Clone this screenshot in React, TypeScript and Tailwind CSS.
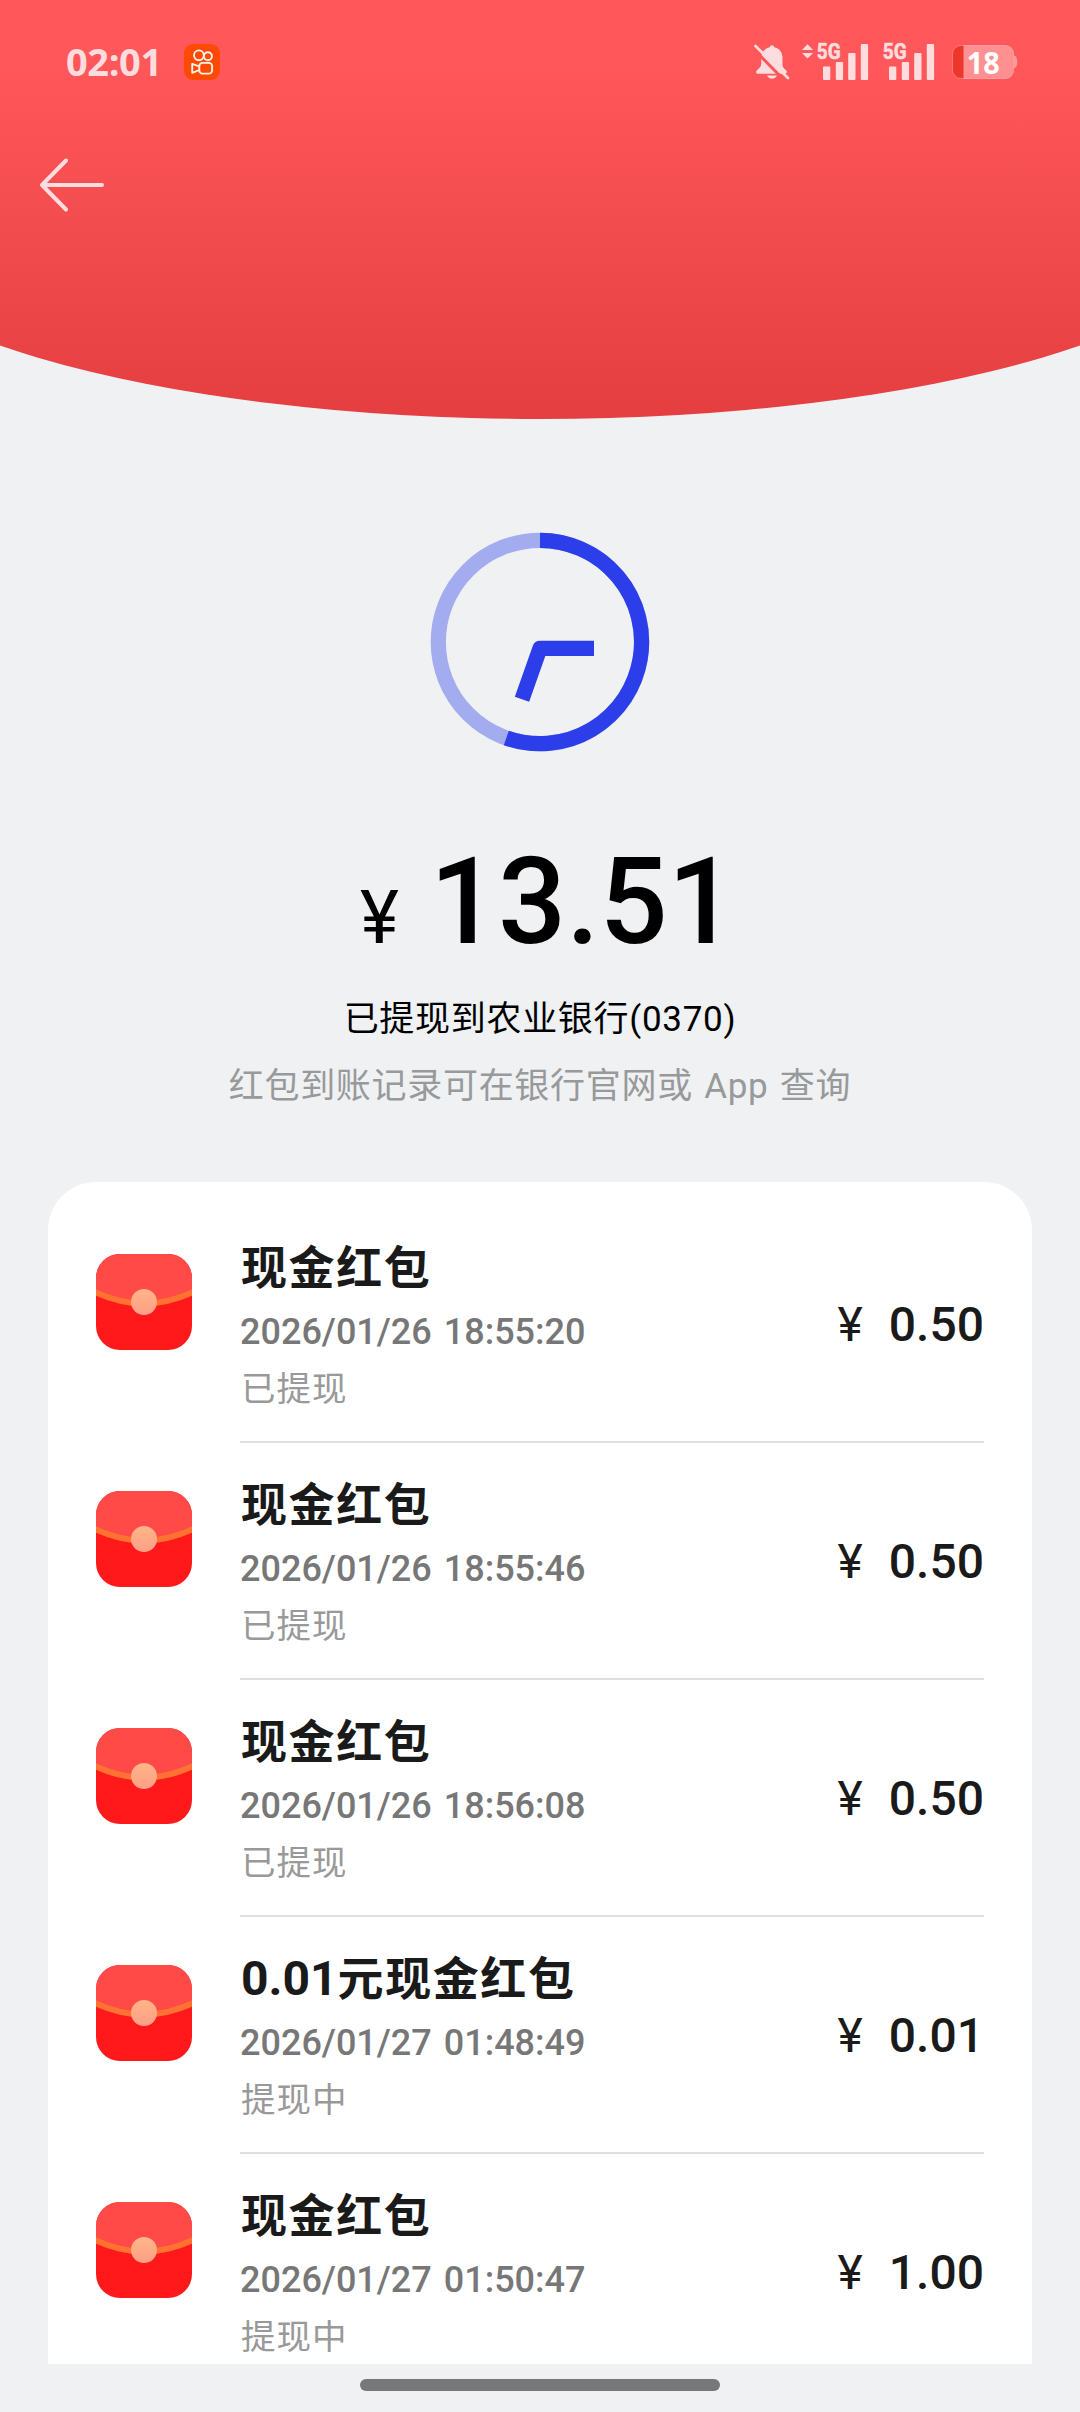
const records = [
  { prefix: '', title: '现金红包', time: '2026/01/26 18:55:20', status: '已提现', amount: '0.50' },
  { prefix: '', title: '现金红包', time: '2026/01/26 18:55:46', status: '已提现', amount: '0.50' },
  { prefix: '', title: '现金红包', time: '2026/01/26 18:56:08', status: '已提现', amount: '0.50' },
  { prefix: '0.01', title: '元现金红包', time: '2026/01/27 01:48:49', status: '提现中', amount: '0.01' },
  { prefix: '', title: '现金红包', time: '2026/01/27 01:50:47', status: '提现中', amount: '1.00' },
];

function AppBadge() {
  return (
    <svg viewBox="0 0 36 36" className="h-9 w-9">
      <rect width="36" height="36" rx="9" fill="#ff4a06" />
      <g fill="none" stroke="#fff3e6" strokeWidth="1.9" strokeLinejoin="round">
        <circle cx="14.9" cy="11.3" r="4.9" />
        <circle cx="23.9" cy="12.2" r="4" />
        <rect x="15.3" y="18.9" width="12.8" height="10.7" rx="3.2" />
        <path d="M15 22.4 8.2 19.9v8.9L15 26.2" />
      </g>
    </svg>
  );
}

function MutedBell() {
  return (
    <svg viewBox="0 0 36 36" className="h-9 w-9">
      <g fill="#ffdcdd">
        <path d="M18 1.2c1.3 0 2.1.8 2.3 2 4.9 1.1 8.2 5 8.2 10.4v6.800c0 2.600 1.600 4.200 3.300 5.700 1.700 1.500 1.300 3.600-.8 3.600H4c-2.200 0-2.400-2.200-.8-3.600 2-1.700 4-3.400 4-6.300V13.600c0-5.400 3.600-9.300 8.500-10.400.2-1.200 1-2 2.300-2z" />
        <path d="M13 31.500h10c-.9 2-2.700 3.200-5 3.200s-4.100-1.200-5-3.200z" />
      </g>
      <path d="M-1 4.500 31 37" stroke="#ff5658" strokeWidth="3" />
      <path d="M1.500 2 34 34" stroke="#ffdcdd" strokeWidth="2.700" strokeLinecap="round" />
    </svg>
  );
}

function Signal({ arrows }: { arrows?: boolean }) {
  return (
    <svg viewBox="-16 0 68 38" className="h-[38px] w-[68px] overflow-visible">
      {arrows && <path d="M-10.500 1.200-5 7h-11zM-10.500 15.400-5 10h-11z" fill="#ffdcdd" transform="translate(1 0)" />}
      <text x="-.2" y="16.300" fontFamily="Roboto" fontWeight="700" fontSize="22.500" textLength="23.800" lengthAdjust="spacingAndGlyphs" fill="#ffdcdd" stroke="#ffdcdd" strokeWidth=".6">5G</text>
      <g fill="#ffdcdd">
        <rect x="6" y="23.500" width="7.300" height="13.500" rx="1" />
        <rect x="18.800" y="19" width="7.300" height="18" rx="1" />
        <rect x="31.200" y="10" width="7.300" height="27" rx="1" />
        <rect x="43.800" y="1" width="7.300" height="36" rx="1" />
      </g>
    </svg>
  );
}

function Battery() {
  return (
    <svg viewBox="0 0 66 34" className="h-[34px] w-[66px] overflow-visible">
      <defs>
        <clipPath id="cell"><rect width="62" height="34" rx="9" /></clipPath>
      </defs>
      <g clipPath="url(#cell)">
        <rect width="62" height="34" fill="#ff9092" />
        <rect width="11.500" height="34" fill="#ee372c" />
      </g>
      <rect x=".5" y=".5" width="61" height="33" rx="8.500" fill="none" stroke="#ffa0a1" strokeOpacity=".6" />
      <path d="M62 10.500c2.300.7 3.300 3.400 3.300 6.500s-1 5.800-3.300 6.500z" fill="#ff9a9c" />
      <text x="14.800" y="28.700" fontFamily="Open Sans" fontWeight="700" fontSize="30.500" textLength="33" lengthAdjust="spacingAndGlyphs" fill="#fff">18</text>
    </svg>
  );
}

function Clock() {
  return (
    <svg viewBox="0 0 220 220" className="h-[220px] w-[220px]" fill="none" strokeWidth="15.200">
      <circle cx="110" cy="110" r="101.700" stroke="#a2acee" />
      <path d="M110 8.300A101.700 101.700 0 1 1 76.300 206" stroke="#2c3eea" />
      <path d="M164 116.300h-54L92 167.300" stroke="#2c3eea" strokeLinejoin="round" />
    </svg>
  );
}

function RedPacket() {
  return (
    <svg viewBox="0 0 96 96" className="mt-[72px] h-24 w-24">
      <defs>
        <clipPath id="packet"><rect width="96" height="96" rx="24" /></clipPath>
        <linearGradient id="seal" x1="0" y1="0" x2="0" y2="1">
          <stop stopColor="#ffb587" />
          <stop offset="1" stopColor="#ff9f87" />
        </linearGradient>
      </defs>
      <g clipPath="url(#packet)">
        <rect width="96" height="96" fill="#ff191a" />
        <path d="M0-2h96v42Q48 57 0 40z" fill="#ff4a47" />
        <path d="M-2 37.500Q48 61.500 98 37.500" fill="none" stroke="#ff7231" strokeWidth="6" />
        <circle cx="48" cy="48" r="13" fill="url(#seal)" />
      </g>
    </svg>
  );
}

export default function App() {
  return (
    <div className="flex h-[2412px] w-[1080px] flex-col overflow-hidden bg-[#eff1f3] font-[Roboto,'Noto_Sans_CJK_SC',sans-serif]">
      <header className="relative h-[419px] shrink-0 overflow-hidden">
        <div className="absolute -left-[170px] top-0 h-[419px] w-[1420px] rounded-b-[50%] bg-linear-to-b from-[#ff575a] from-15% to-[#e53e41]" />
        <div className="relative flex h-[124px] items-center pl-[66px] pr-[62px]">
          <span className="mb-[3px] w-[118px] font-['Open_Sans'] text-[38px] font-bold leading-none tracking-[-0.4px] text-[#ffdcdd]">02:01</span>
          <AppBadge />
          <div className="ml-auto flex items-center">
            <MutedBell />
            <div className="ml-[11px]"><Signal arrows /></div>
            <div className="-ml-[2px]"><Signal /></div>
            <div className="ml-[17px]"><Battery /></div>
          </div>
        </div>
        <svg viewBox="0 0 66 54" className="relative ml-10 mt-[34px] h-[54px] w-[66px]" fill="none" stroke="#ffdcdd" strokeWidth="4" strokeLinecap="round" strokeLinejoin="round">
          <path d="M26 2.500 2 27l24 24.500M2 27h60" />
        </svg>
      </header>

      <section className="flex h-[763px] shrink-0 flex-col items-center pt-[113px]">
        <Clock />
        <div className="mt-[80px] flex h-[141px] items-baseline pl-[16px] leading-[141px] text-black">
          <span className="mr-[31px] text-[74px]">¥</span>
          <span className="text-[120px] font-medium">13.51</span>
        </div>
        <p className="mt-[20px] h-[54px] text-[35px] leading-[54px] tracking-[0.7px] text-black">已提现到农业银行(0370)</p>
        <p className="mt-[13px] h-[54px] text-[35px] leading-[54px] tracking-[0.7px] text-[#98999a] [word-spacing:2px]">红包到账记录可在银行官网或 App 查询</p>
      </section>

      <main className="mx-12 h-[1182px] shrink-0 overflow-hidden rounded-t-[48px] bg-white px-12">
        {records.map((r) => (
          <div key={r.time} className="flex h-[237px] gap-12">
            <RedPacket />
            <div className="flex h-[261px] flex-1 flex-col border-b-2 border-[#dedfe0] pt-[51px]">
              <div className="flex justify-between">
                <div>
                  <h2 className="h-[70px] whitespace-nowrap pl-px text-[46px] font-bold leading-[70px] tracking-[1.6px] text-[#1a1a1a]">
                    {r.prefix && <span className="text-[48px] tracking-normal">{r.prefix}</span>}{r.title}
                  </h2>
                  <p className="mt-[2px] h-[54px] whitespace-nowrap text-[36px] font-medium leading-[54px] text-[#777] [word-spacing:3px]">{r.time}</p>
                  <p className="mt-[3px] h-[54px] pl-px text-[34.5px] leading-[54px] tracking-[1px] text-[#999]">{r.status}</p>
                </div>
                <div className="mt-[62px] flex h-[60px] items-baseline text-[48px] leading-[60px] text-[#1a1a1a]">
                  <span className="mr-[26px]">¥</span>
                  <span className="font-medium">{r.amount}</span>
                </div>
              </div>
            </div>
          </div>
        ))}
      </main>

      <footer className="flex h-12 shrink-0 justify-center pt-[15px]">
        <div className="h-3 w-[360px] rounded-full bg-[#787878]" />
      </footer>
    </div>
  );
}
